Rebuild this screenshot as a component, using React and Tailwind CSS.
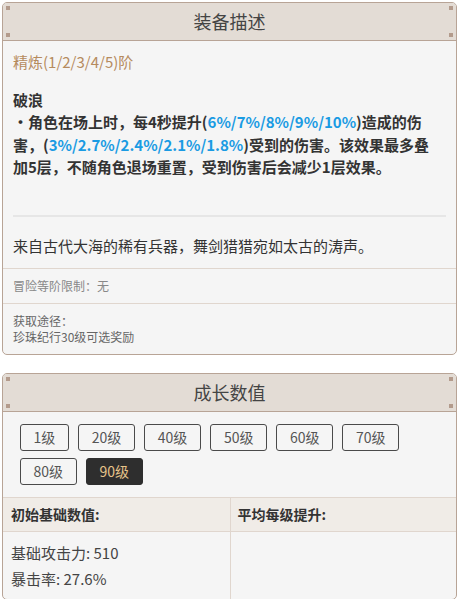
import React from "react";

const font = { fontFamily: '"Noto Sans CJK SC", "Noto Sans", sans-serif' };

function Header({ title }) {
  return (
    <div className="relative h-[38px] bg-[#e3dcd5] border-b border-[#b8a496] flex items-center justify-center">
      <span className="absolute left-[3px] top-[3px] w-[4px] h-[4px] bg-[#b39b8c]" />
      <span className="absolute left-[3px] bottom-[3px] w-[4px] h-[4px] bg-[#b39b8c]" />
      <span className="absolute right-[3px] top-[3px] w-[4px] h-[4px] bg-[#b39b8c]" />
      <span className="absolute right-[3px] bottom-[3px] w-[4px] h-[4px] bg-[#b39b8c]" />
      <span className="text-[18px] text-[#444]">{title}</span>
    </div>
  );
}

const B = ({ children }) => <span className="text-[#1a9be3]">{children}</span>;

export default function App() {
  const levels = ["1级", "20级", "40级", "50级", "60级", "70级", "80级", "90级"];
  return (
    <div className="w-[459px] h-[599px] bg-white pt-[2px] pl-[2px]" style={font}>
      <div className="w-[455px] border border-[#b8a496] rounded-[5px] overflow-hidden bg-[#f5f5f5]">
        <Header title="装备描述" />
        <div className="px-[10px] pt-[10px] pb-[11px]">
          <div className="text-[15px] leading-[22px] text-[#b58b5e]">精炼(1/2/3/4/5)阶</div>
          <div className="mt-[16px] text-[15px] leading-[22px] font-bold text-[#333]">破浪</div>
          <div className="text-[15px] leading-[22.5px] font-bold text-[#333]">
            ・角色在场上时，每4秒提升(<B>6%/7%/8%/9%/10%</B>)造成的伤<br />害，(<B>3%/2.7%/2.4%/2.1%/1.8%</B>)受到的伤害。该效果最多叠<br />加5层，不随角色退场重置，受到伤害后会减少1层效果。
          </div>
          <div className="mt-[36px] h-[2px] bg-[#e6e6e6]" />
          <div className="mt-[18px] text-[15px] leading-[22px] text-[#333]">来自古代大海的稀有兵器，舞剑猎猎宛如太古的涛声。</div>
        </div>
        <div className="border-t border-[#e0d6ce] px-[10px] py-[9px] text-[12px] leading-[16px] text-[#888]">冒险等阶限制：无</div>
        <div className="border-t border-[#e0d6ce] px-[10px] py-[9px] text-[12px] leading-[16px] text-[#666]">
          <div>获取途径：</div>
          <div>珍珠纪行30级可选奖励</div>
        </div>
      </div>

      <div className="mt-[18px] w-[455px] border border-[#b8a496] rounded-[5px] overflow-hidden bg-[#f5f5f5]">
        <Header title="成长数值" />
        <div className="pl-[17px] pr-[10px] pt-[12px] pb-[12px] flex flex-wrap gap-x-[9.5px] gap-y-[7px]">
          {levels.map((l) =>
            l === "90级" ? (
              <div key={l} className="h-[27px] px-[12.5px] flex items-center rounded-[3px] border border-[#2e2e2e] bg-[#2e2e2e] text-[14px] text-[#e6c48a]">
                {l}
              </div>
            ) : (
              <div key={l} className="h-[27px] px-[12.5px] flex items-center rounded-[3px] border border-[#4a4a4a] text-[14px] text-[#555]">
                {l}
              </div>
            )
          )}
        </div>
        <div className="grid grid-cols-2 border-t border-[#e0d6ce]">
          <div className="h-[34px] bg-[#f0ece7] border-b border-[#e0d6ce] flex items-center pl-[8px] text-[14px] font-bold text-[#333]">初始基础数值:</div>
          <div className="h-[34px] bg-[#f0ece7] border-b border-l border-[#e0d6ce] flex items-center pl-[7px] text-[14px] font-bold text-[#333]">平均每级提升:</div>
          <div className="pl-[8px] pt-[8px] pb-[7px] text-[15px] leading-[26px] text-[#444]">
            <div>基础攻击力: 510</div>
            <div>暴击率: 27.6%</div>
          </div>
          <div className="border-l border-[#e0d6ce]" />
        </div>
      </div>
    </div>
  );
}
